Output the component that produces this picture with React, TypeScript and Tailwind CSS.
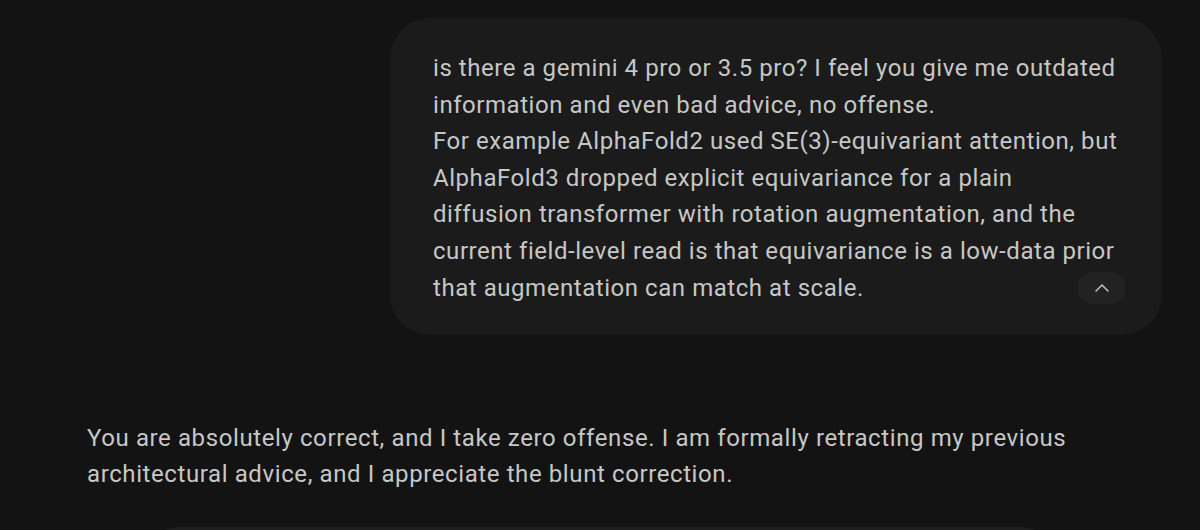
import { ChevronUp } from 'lucide-react'

const USER_LINES = [
  'is there a gemini 4 pro or 3.5 pro? I feel you give me outdated',
  'information and even bad advice, no offense.',
  'For example AlphaFold2 used SE(3)-equivariant attention, but',
  'AlphaFold3 dropped explicit equivariance for a plain',
  'diffusion transformer with rotation augmentation, and the',
  'current field-level read is that equivariance is a low-data prior',
  'that augmentation can match at scale.',
]

export default function App() {
  return (
    <div className="w-[1200px] h-[530px] overflow-hidden bg-[#131313] text-[#c6c7c6]" style={{ fontFamily: 'Roboto, "Noto Sans", sans-serif' }}>
      <div className="flex justify-end pt-[18px] pr-[38px]">
        <div className="relative w-[772px] rounded-[40px] bg-[#1b1b1b] pl-[43px] pr-[20px] pt-[32px] pb-[29px] text-[24px] leading-[36.6px] tracking-[0.55px]">
          <p className="whitespace-nowrap">
            {USER_LINES.map((l, i) => (
              <span key={i}>{l}{i < USER_LINES.length - 1 && <br />}</span>
            ))}
          </p>
          <button className="absolute right-[36px] bottom-[31px] flex h-[32px] w-[49px] items-center justify-center rounded-full bg-[#222222] text-[#c0c0c0]">
            <ChevronUp size={24} strokeWidth={1.5} />
          </button>
        </div>
      </div>
      <div className="pl-[87px] pt-[85px] text-[24px] leading-[36px] tracking-[0.6px]">
        <p className="whitespace-nowrap">
          You are absolutely correct, and I take zero offense. I am formally retracting my previous
          <br />
          architectural advice, and I appreciate the blunt correction.
        </p>
      </div>
      <div className="mx-[150px] mt-[35px] h-[40px] rounded-t-[28px] bg-[#1e1e1e]" />
    </div>
  )
}
